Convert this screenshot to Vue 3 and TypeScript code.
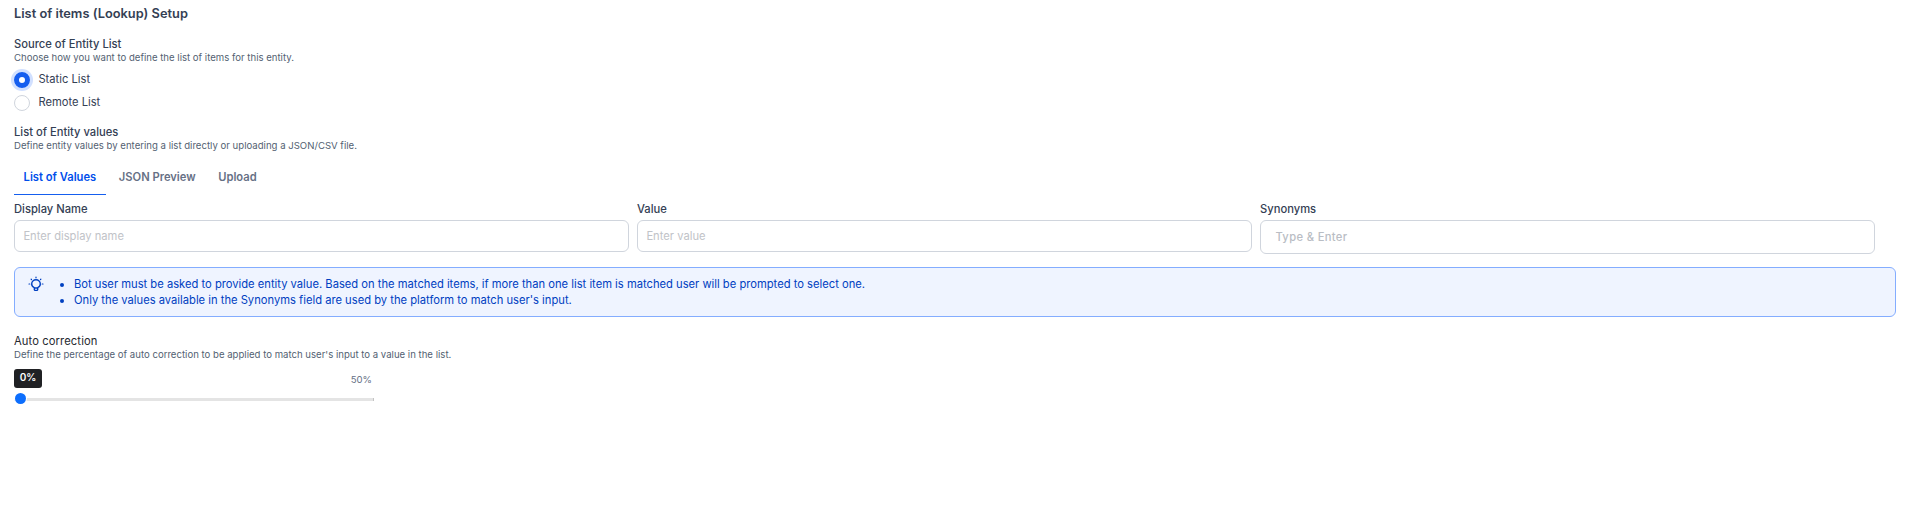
<script setup lang="ts">
import { ref } from 'vue'

const source = ref('static')
const sources = [
  { id: 'static', label: 'Static List' },
  { id: 'remote', label: 'Remote List' },
]

const activeTab = ref('List of Values')
const tabs = ['List of Values', 'JSON Preview', 'Upload']

const fields = [
  { label: 'Display Name', placeholder: 'Enter display name', tags: false },
  { label: 'Value', placeholder: 'Enter value', tags: false },
  { label: 'Synonyms', placeholder: 'Type & Enter', tags: true },
]

const notes = [
  'Bot user must be asked to provide entity value. Based on the matched items, if more than one list item is matched user will be prompted to select one.',
  "Only the values available in the Synonyms field are used by the platform to match user's input.",
]
</script>

<template>
  <main class="setup">
    <h1 class="title">List of items (Lookup) Setup</h1>

    <section class="source">
      <h2 class="label">Source of Entity List</h2>
      <p class="hint">Choose how you want to define the list of items for this entity.</p>
      <div class="radios">
        <label v-for="s in sources" :key="s.id" class="radio-row" @click="source = s.id">
          <span class="radio" :class="{ checked: source === s.id }"></span>
          <span class="radio-text">{{ s.label }}</span>
        </label>
      </div>
    </section>

    <section class="values">
      <h2 class="label">List of Entity values</h2>
      <p class="hint">Define entity values by entering a list directly or uploading a JSON/CSV file.</p>
      <nav class="tabs">
        <button
          v-for="t in tabs"
          :key="t"
          type="button"
          class="tab"
          :class="{ active: activeTab === t }"
          @click="activeTab = t"
        >{{ t }}</button>
      </nav>
      <div class="fields">
        <div v-for="f in fields" :key="f.label" class="field">
          <span class="label field-label">{{ f.label }}</span>
          <input class="input" :class="{ tags: f.tags }" type="text" :placeholder="f.placeholder" />
        </div>
      </div>
    </section>

    <aside class="alert">
      <svg class="bulb" viewBox="0 0 16 16" fill="none" stroke="currentColor" stroke-linecap="round">
        <path d="M8 1V1.8M3.1 3.1L3.5 3.5M12.9 3.1L12.5 3.5M1 8H1.8M14.2 8H15" stroke-width="1.2" />
        <path d="M6.3 11.6C4.8 11 3.7 9.7 3.7 8A4.3 4.3 0 0 1 12.3 8C12.3 9.7 11.2 11 9.7 11.6V13.4A1 1 0 0 1 8.7 14.4H7.3A1 1 0 0 1 6.3 13.4ZM6.3 12H9.7" stroke-width="1.4" stroke-linejoin="round" />
      </svg>
      <ul class="notes">
        <li v-for="n in notes" :key="n">{{ n }}</li>
      </ul>
    </aside>

    <section class="correction">
      <h2 class="label regular">Auto correction</h2>
      <p class="hint">Define the percentage of auto correction to be applied to match user's input to a value in the list.</p>
      <div class="slider">
        <div class="slider-head">
          <span class="badge">0%</span>
          <span class="max">50%</span>
        </div>
        <div class="track"><span class="thumb"></span><span class="end"></span></div>
      </div>
    </section>
  </main>
</template>

<style>
body {
  background: #fff;
}
</style>

<style scoped>
.setup {
  box-sizing: border-box;
  height: 528px;
  padding: 4px 14px 0;
  font-family: Inter, 'Liberation Sans', sans-serif;
  color: #344054;
}
.title,
.label,
.hint {
  margin: 0;
  white-space: nowrap;
}
.title {
  font-size: 12.8px;
  line-height: 20px;
  font-weight: 600;
  letter-spacing: 0.02px;
}
.label {
  display: block;
  font-size: 11.2px;
  line-height: 16px;
  font-weight: 500;
}
.hint {
  font-size: 9.6px;
  line-height: 11px;
  padding-bottom: 1px;
  color: #535f72;
}
.source {
  margin-top: 12px;
  height: 88px;
}
.radios {
  display: flex;
  flex-direction: column;
  gap: 7px;
  margin-top: 8px;
}
.radio-row {
  display: flex;
  align-items: center;
  gap: 8.4px;
  height: 16px;
}
.radio {
  box-sizing: border-box;
  width: 16px;
  height: 16px;
  border: 1px solid #d0d5dd;
  border-radius: 50%;
}
.radio.checked {
  border: 5px solid #155eef;
  box-shadow: 0 0 0 3px #d1e0ff;
}
.radio-text {
  font-size: 11.2px;
  line-height: 14px;
  margin-top: -2px;
}
.tabs {
  display: flex;
  gap: 3.4px;
  height: 31px;
  margin-top: 12px;
}
.tab {
  padding: 0 9.6px 4px;
  border: 0;
  border-bottom: 1px solid transparent;
  background: none;
  font: 600 11.2px/16px Inter, 'Liberation Sans', sans-serif;
  color: #667085;
}
.tab.active {
  color: #004eeb;
  border-bottom-color: #155eef;
}
.fields {
  display: flex;
  align-items: flex-start;
  gap: 8px;
  width: 1861px;
  margin-top: 6px;
}
.field {
  flex: 1;
}
.field-label {
  margin-bottom: 3px;
}
.input {
  display: block;
  box-sizing: border-box;
  width: 100%;
  height: 32px;
  padding: 0 8.4px;
  border: 1px solid #d0d5dd;
  border-radius: 6px;
  outline: none;
  font: 400 11.2px/16px Inter, 'Liberation Sans', sans-serif;
}
.input::placeholder {
  color: #c1c3c8;
  opacity: 1;
}
.input.tags {
  height: 34px;
  padding: 0 14.4px;
  font-weight: 500;
  letter-spacing: 0.35px;
}
.input.tags::placeholder {
  color: #b9bdc4;
}
.alert {
  display: flex;
  box-sizing: border-box;
  height: 50px;
  margin-top: 13px;
  padding: 8px 13px;
  border: 1px solid #84adff;
  border-radius: 6px;
  background: #eff4ff;
}
.bulb {
  flex: none;
  width: 16px;
  height: 16px;
  color: #0040c1;
}
.notes {
  margin: 0;
  padding: 0 0 0 30px;
  font-size: 11.2px;
  line-height: 16px;
  color: #0040c1;
  white-space: nowrap;
}
.correction {
  margin-top: 16px;
}
.regular {
  font-weight: 400;
  letter-spacing: 0.11px;
  color: #25282f;
}
.slider {
  width: 360px;
  margin-top: 8px;
}
.slider-head {
  display: flex;
  justify-content: space-between;
  height: 19px;
}
.badge {
  width: 28px;
  border-radius: 3px;
  background: #202124;
  color: #fff;
  font-size: 10px;
  line-height: 17px;
  font-weight: 600;
  text-align: center;
}
.max {
  padding-right: 2px;
  font-size: 9.6px;
  line-height: 21px;
  color: #667085;
}
.track {
  display: flex;
  align-items: center;
  justify-content: space-between;
  height: 3px;
  margin-top: 10px;
  background: #e4e4e4;
}
.thumb {
  width: 11px;
  height: 11px;
  margin: -2px 0 0 1px;
  border-radius: 50%;
  background: #0d6efd;
  box-shadow: 0 0 0 1px #fff;
}
.end {
  width: 1px;
  height: 3px;
  background: #c4c4c4;
}
</style>
